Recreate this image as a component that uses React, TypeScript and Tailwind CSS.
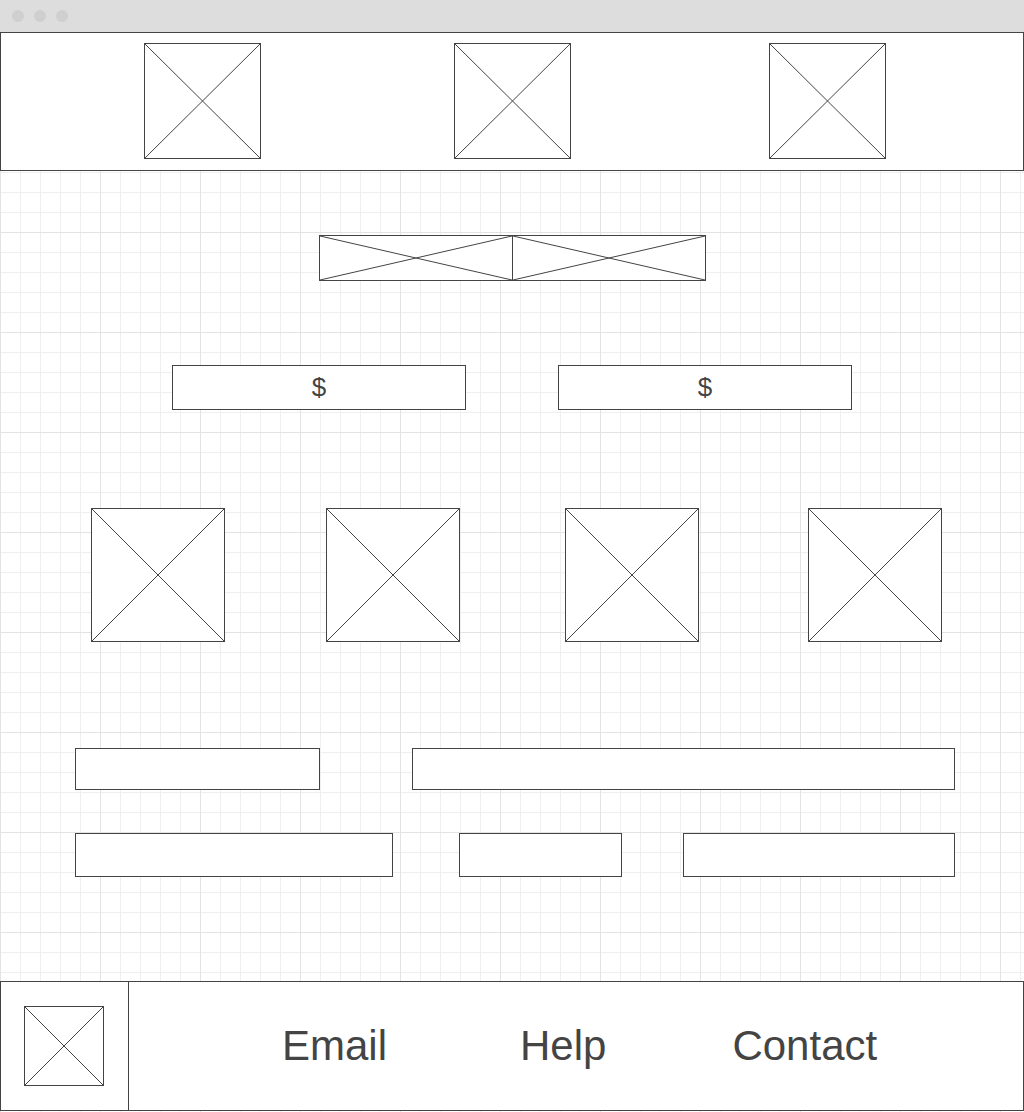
import React from "react";

function XBox({ className = "" }: { className?: string }) {
  return (
    <div className={`relative shrink-0 border border-[#444] bg-white ${className}`}>
      <svg className="absolute inset-0 h-full w-full" viewBox="0 0 100 100" preserveAspectRatio="none">
        <line x1="0" y1="0" x2="100" y2="100" stroke="#444" strokeWidth="1" vectorEffect="non-scaling-stroke" />
        <line x1="100" y1="0" x2="0" y2="100" stroke="#444" strokeWidth="1" vectorEffect="non-scaling-stroke" />
      </svg>
    </div>
  );
}

function Field({ className = "", children }: { className?: string; children?: React.ReactNode }) {
  return (
    <div className={`flex shrink-0 items-center justify-center border border-[#444] bg-white text-[#444] ${className}`}>
      {children}
    </div>
  );
}

export default function App() {
  return (
    <div className="h-[1112px] w-[1024px] overflow-hidden bg-white font-['Liberation_Sans',Arial,sans-serif]">
      {/* title bar */}
      <div className="flex h-[32px] items-center gap-[10px] bg-[#dddddd] pl-[12px]">
        <span className="h-[12px] w-[12px] rounded-full bg-[#cfcfcf]" />
        <span className="h-[12px] w-[12px] rounded-full bg-[#cfcfcf]" />
        <span className="h-[12px] w-[12px] rounded-full bg-[#cfcfcf]" />
      </div>

      {/* canvas */}
      <div className="flex h-[1080px] flex-col bg-[linear-gradient(to_right,#e3e3e3_1px,transparent_1px),linear-gradient(to_bottom,#e3e3e3_1px,transparent_1px),linear-gradient(to_right,#efefef_1px,transparent_1px),linear-gradient(to_bottom,#efefef_1px,transparent_1px)] [background-size:100px_100px,100px_100px,20px_20px,20px_20px]">
        {/* header */}
        <div className="flex h-[139px] w-[1024px] shrink-0 items-start border border-[#444] bg-white pt-[10px]">
          <XBox className="ml-[143px] h-[116px] w-[117px]" />
          <XBox className="ml-[193px] h-[116px] w-[117px]" />
          <XBox className="ml-[198px] h-[116px] w-[117px]" />
        </div>

        {/* banner */}
        <div className="mt-[64px] flex">
          <XBox className="ml-[319px] h-[46px] w-[194px]" />
          <XBox className="-ml-px h-[46px] w-[194px]" />
        </div>

        {/* price fields */}
        <div className="mt-[84px] flex">
          <Field className="ml-[172px] h-[45px] w-[294px] text-[26px]">$</Field>
          <Field className="ml-[92px] h-[45px] w-[294px] text-[26px]">$</Field>
        </div>

        {/* product images */}
        <div className="mt-[98px] flex">
          <XBox className="ml-[91px] h-[134px] w-[134px]" />
          <XBox className="ml-[101px] h-[134px] w-[134px]" />
          <XBox className="ml-[105px] h-[134px] w-[134px]" />
          <XBox className="ml-[109px] h-[134px] w-[134px]" />
        </div>

        {/* form row 1 */}
        <div className="mt-[106px] flex">
          <Field className="ml-[75px] h-[42px] w-[245px]" />
          <Field className="ml-[92px] h-[42px] w-[543px]" />
        </div>

        {/* form row 2 */}
        <div className="mt-[43px] flex">
          <Field className="ml-[75px] h-[44px] w-[318px]" />
          <Field className="ml-[66px] h-[44px] w-[163px]" />
          <Field className="ml-[61px] h-[44px] w-[272px]" />
        </div>

        {/* footer */}
        <div className="mt-[104px] flex h-[130px] w-[1024px] shrink-0 border border-[#444] bg-white">
          <div className="flex h-full w-[128px] shrink-0 items-center border-r border-[#444] pl-[23px]">
            <XBox className="h-[80px] w-[80px]" />
          </div>
          <div className="flex flex-1 items-center text-[42px] leading-none text-[#444]">
            <span className="ml-[153px]">Email</span>
            <span className="ml-[133px]">Help</span>
            <span className="ml-[126px]">Contact</span>
          </div>
        </div>
      </div>
    </div>
  );
}
